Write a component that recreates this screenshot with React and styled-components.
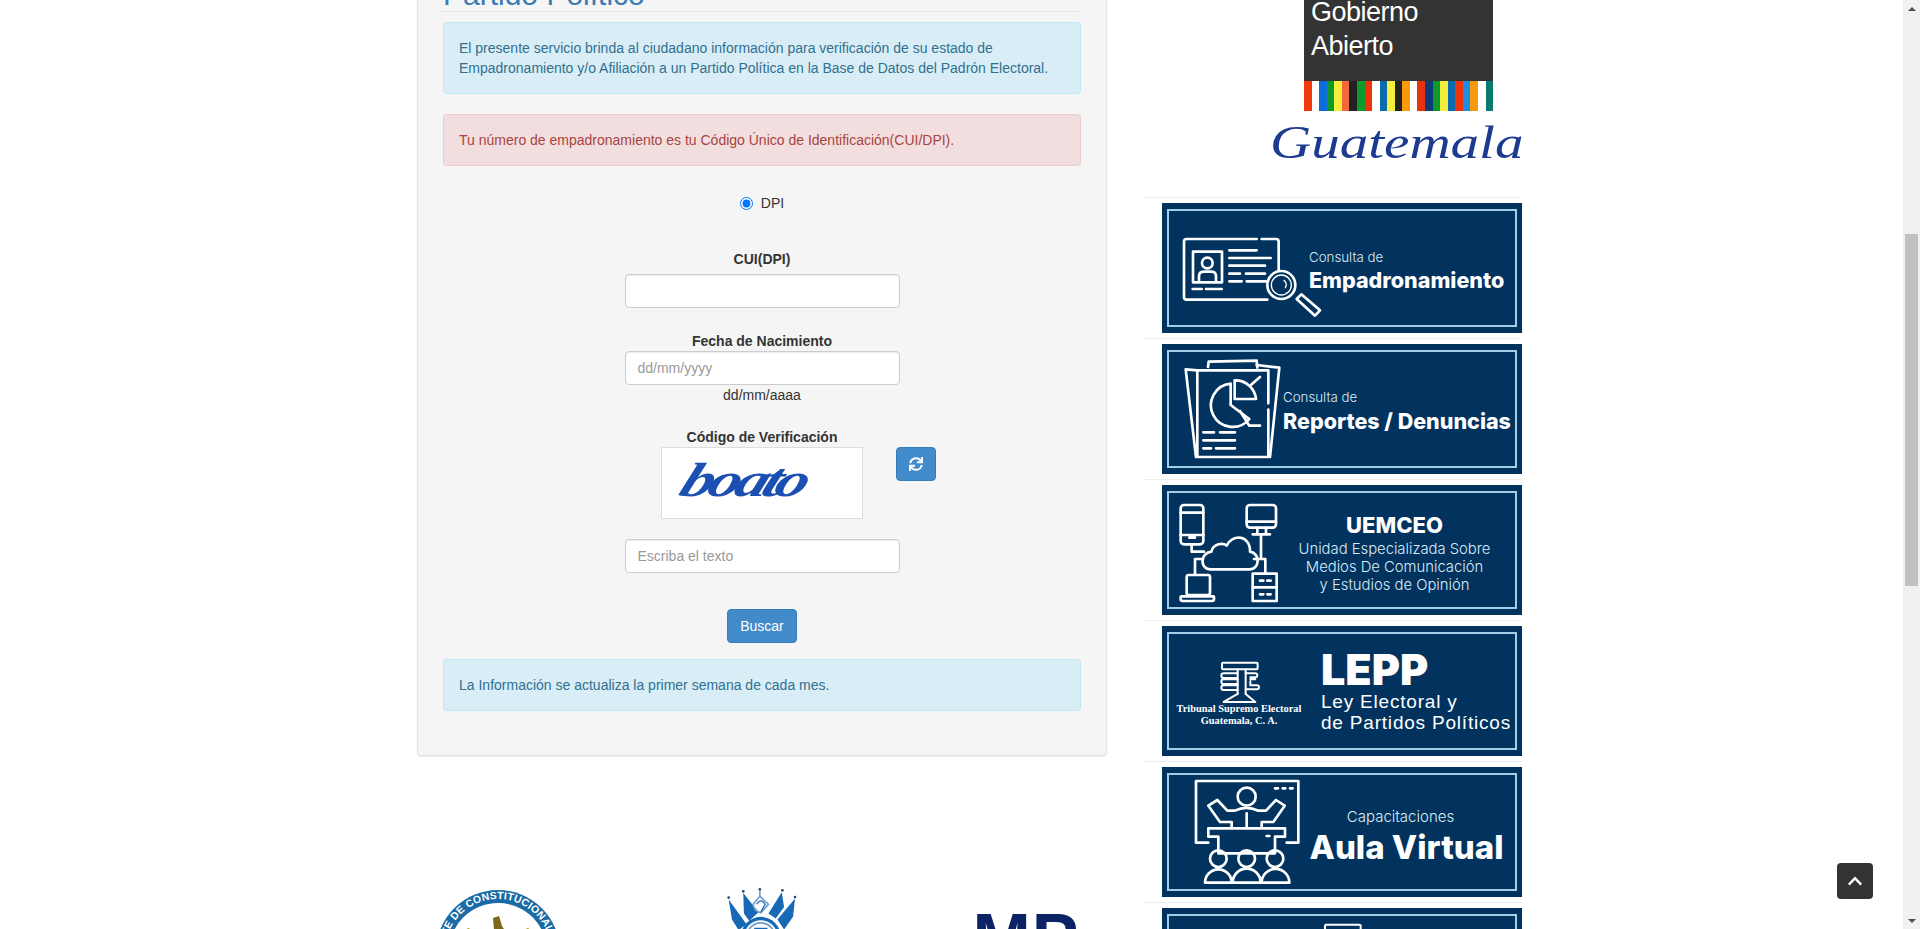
import React from 'react';
import styled, { createGlobalStyle } from 'styled-components';
import { FaSync, FaChevronUp } from 'react-icons/fa';

const Global = createGlobalStyle`
  html, body { margin: 0; padding: 0; height: 100%; overflow: hidden; background: #fff; }
  body { font-family: "Liberation Sans", Arial, sans-serif; font-size: 14px; line-height: 20px; color: #333; }
  * { box-sizing: border-box; }
`;

const Shell = styled.div`display: flex; height: 100vh; overflow: hidden;`;
const Viewport = styled.main`flex: 1; min-width: 0; overflow: hidden;`;
const Columns = styled.div`display: flex; gap: 36px; margin-top: -60px; padding-left: 417px;`;
const LeftCol = styled.div`flex: none; width: 690px;`;
const RightCol = styled.aside`flex: none; width: 379px;`;

const Well = styled.section`
  background: #f5f5f5; border: 1px solid #e3e3e3; border-radius: 4px;
  padding: 37px 25px 44px; box-shadow: inset 0 1px 1px rgba(0,0,0,.05), 0 1px 1px rgba(0,0,0,.08);
`;
const Title = styled.h2`
  margin: 0 -1px 10px -2px; padding-left: 2px; font-size: 30px; line-height: 33px; font-weight: 400;
  color: #3a7cb5; border-bottom: 1px solid #e6e6e6;
`;
const Alert = styled.div`
  border: 1px solid ${p => p.$tone === 'danger' ? '#ebccd1' : '#bce8f1'};
  background: ${p => p.$tone === 'danger' ? '#f2dede' : '#d9edf7'};
  color: ${p => p.$tone === 'danger' ? '#a94442' : '#31708f'};
  border-radius: 4px; padding: 15px 12px 15px 15px; margin-top: ${p => p.$top || 0}px;
`;
const RadioRow = styled.label`display: flex; justify-content: center; align-items: center; gap: 8px; height: 20px; margin-top: 27px;`;
const Radio = styled.input`margin: 0; width: 13px; height: 13px;`;
const Field = styled.div`display: flex; flex-direction: column; align-items: center; margin-top: ${p => p.$top || 0}px;`;
const Label = styled.label`font-weight: 700; color: #333; text-align: center; line-height: 20px;`;
const Hint = styled.span`text-align: center;`;
const TextInput = styled.input`
  display: block; width: 275px; height: 34px; margin-top: ${p => p.$top || 0}px; padding: 6px 12px;
  font: 14px/20px "Liberation Sans", Arial, sans-serif; color: #555; background: #fff;
  border: 1px solid #ccc; border-radius: 4px; box-shadow: inset 0 1px 1px rgba(0,0,0,.075);
  &::placeholder { color: #999; opacity: 1; }
`;
const CaptchaRow = styled.div`display: grid; grid-template-columns: 1fr 202px 1fr; align-items: start;`;
const CaptchaImage = styled.div`
  grid-column: 2; height: 72px; background: #fff; border: 1px solid #ddd; overflow: hidden;
  display: flex; padding: 6px 0 0 19px;
`;
const CaptchaWord = styled.span`
  display: inline-block; font: italic 700 48px/52px "Liberation Serif", serif; letter-spacing: -4px; color: #1c4fb2;
  transform: scaleX(1.36) skewX(-16deg); transform-origin: left center;
`;
const Btn = styled.button`
  display: inline-flex; align-items: center; justify-content: center; padding: 0; height: 34px; width: ${p => p.$w}px;
  background: #428bca; color: #fff; border: 1px solid #357ebd; border-radius: 4px;
  font: 14px/20px "Liberation Sans", Arial, sans-serif;
`;
const RefreshBtn = styled(Btn)`justify-self: start; margin-left: 33px;`;
const Center = styled.div`display: flex; justify-content: center; margin-top: ${p => p.$top || 0}px;`;

const LogoRow = styled.div`display: grid; grid-template-columns: repeat(3, 264px); margin: 131px -51px 0;`;
const LogoCell = styled.div`display: flex; justify-content: center; padding-top: ${p => p.$top || 0}px;`;
const MpMark = styled.span`font: 700 70px/70px "Liberation Sans", Arial, sans-serif; color: #0b2265; letter-spacing: 1px;`;

const OpenGov = styled.div`margin-left: 161px; width: 189px;`;
const OpenGovBox = styled.div`background: #333; color: #fff; padding: 55px 0 18px 7px; font-size: 27px; letter-spacing: -.5px; line-height: 34px;`;
const Stripes = styled.div`display: flex; height: 30px;`;
const Stripe = styled.span`flex: 1; background: ${p => p.$c};`;
const Signature = styled.div`height: 86px; padding: 3px 0 0 127px;`;
const SignatureWord = styled.span`
  display: inline-block; font: italic 400 46px/58px "Liberation Serif", serif; color: #1c3a8f;
  transform: scaleX(1.24); transform-origin: left center;
`;

const Item = styled.div`border-top: 1px solid #eee; padding: 5px 0;`;
const Banner = styled.a`display: flex; width: 360px; height: 130px; margin-left: 19px; padding: 6px 5px; background: #02335f; color: #fff;`;
const Frame = styled.div`flex: 1; min-width: 0; display: flex; align-items: ${p => p.$align || 'center'}; border: 2px solid #a5cdea;`;
const Icon = styled.svg`
  flex: none; overflow: visible; fill: none; stroke: #fff; stroke-width: 8; stroke-linecap: round; stroke-linejoin: round;
`;
const Stack = styled.div`
  flex: 1; min-width: 0; display: flex; flex-direction: column;
  align-items: ${p => p.$center ? 'center' : 'flex-start'};
  padding-top: ${p => p.$pt || 0}px; padding-right: ${p => p.$pr || 0}px; white-space: nowrap;
  font-family: Inter, "Open Sans", sans-serif;
`;
const Thin = styled.span`
  font-size: ${p => p.$size || 13.3}px; line-height: ${p => p.$lh || 18}px; font-weight: 300; color: #dcecf7;
  margin-right: ${p => p.$mr || 0}px;
`;
const Strong = styled.span`font-size: ${p => p.$size}px; line-height: ${p => p.$lh}px; font-weight: 800;`;
const TseBlock = styled.div`
  flex: none; width: 140px; padding-top: 26px; display: flex; flex-direction: column; align-items: center;
  font: 700 10.4px/12px "Liberation Serif", serif; white-space: nowrap;
`;
const LawStack = styled.div`flex: 1; padding: 15px 0 0 12px; display: flex; flex-direction: column; white-space: nowrap;`;
const LawTitle = styled.span`font: 900 43px/40px Inter, sans-serif; margin-bottom: 2px;`;
const LawLine = styled.span`font: 400 19px/21px "Liberation Sans", Arial, sans-serif; letter-spacing: .8px;`;
const LastMark = styled.div`flex: 1; display: flex; justify-content: center; padding-top: 6px;`;

const Scrollbar = styled.div`flex: none; width: 17px; background: #f1f1f1; display: flex; flex-direction: column; align-items: center;`;
const ArrowBox = styled.div`flex: none; height: 17px; display: flex; align-items: center; justify-content: center;`;
const Arrow = styled.span`
  width: 0; height: 0; border-left: 4px solid transparent; border-right: 4px solid transparent;
  ${p => p.$down ? 'border-top: 4px solid #505050;' : 'border-bottom: 4px solid #505050;'}
`;
const Thumb = styled.div`flex: none; width: 13px; height: 352px; margin-top: 217px; background: #c1c1c1;`;
const Fill = styled.div`flex: 1;`;
const ToTop = styled.button`
  position: fixed; right: 47px; bottom: 30px; width: 36px; height: 36px; padding: 0; border: 0; border-radius: 4px;
  background: #333; color: #fff; display: flex; align-items: center; justify-content: center;
`;

const stripes = ['#f03a0c','#fff','#0a6fd8','#0c9a2c','#f7ee3c','#f2683a','#222','#0c9a2c','#f0330c','#fff','#0a6cae','#f7ee3c','#222','#f79a0c','#fff','#e8330c','#0e3a78','#0c9a2c','#f2ee3c','#0a6cae','#f0330c','#1a8fe8','#f79a0c','#fff','#0a7a70'];

const TseMark = ({ w = 45, h = 43.3 }) => (
  <Icon width={w} height={h} viewBox="230 120 135 130" style={{ strokeWidth: 6 }}>
    <rect x="245" y="128" width="107" height="20" rx="3" />
    <path d="M292 148V222M316 148V222" />
    <path d="M292 160H250a7 7 0 0 0 0 14H292M292 178H250a7 7 0 0 0 0 14H292M292 196H250a7 7 0 0 0 0 14H292" />
    <path d="M316 160H345a6 6 0 0 1 0 12H330M330 178H345M330 184V196H350a6 6 0 0 1 0 12H316" />
    <path d="M292 222L250 246H345L316 222" />
  </Icon>
);

const CardIcon = () => (
  <Icon width={140} height={114} viewBox="87 634 420 342">
    <path d="M350 718H140a8 8 0 0 0-8 8V892a8 8 0 0 0 8 8H382M365 718H408a8 8 0 0 1 8 8V812" />
    <rect x="159" y="756" width="87" height="92" />
    <circle cx="202" cy="790" r="16" />
    <path d="M177 846V830q0-14 14-14H214q14 0 14 14V846" />
    <path d="M268 752H350M268 775H392M268 798H375M268 822H300M318 822H375M268 845H305M320 845H378M158 868H185M198 868H245" />
    <circle cx="424" cy="856" r="42" />
    <circle cx="424" cy="856" r="30" strokeWidth="4" />
    <path d="M432 842a16 16 0 0 1 4 22" strokeWidth="4" />
    <path d="M484 884L540 932L525 948L470 898Z" />
  </Icon>
);

const ReportIcon = () => (
  <Icon width={114} height={114} viewBox="87 51 342 342">
    <path d="M172 106L137 103L168 366" />
    <path d="M204 96L206 80L350 77L352 98" />
    <path d="M350 90L418 98L390 366" />
    <path d="M385 205V106H172V366H385V224" />
    <path d="M272 146A65 65 0 1 0 328 252L272 210Z" />
    <path d="M284 136V192H348A62 62 0 0 0 284 136ZM330 152L360 126M300 228L328 272H360" />
    <path d="M190 292H222M240 292H285M190 316H285M190 340H213M228 340H285" />
  </Icon>
);

const CloudIcon = () => (
  <Icon width={110} height={114} viewBox="87 474 330 342">
    <rect x="122" y="510" width="68" height="118" rx="10" />
    <path d="M122 533H190M122 600H190M148 608H165" />
    <rect x="320" y="510" width="88" height="68" rx="10" />
    <path d="M320 560H408M352 578V598M378 578V598M338 598H390" />
    <path d="M212 703C180 703 178 655 214 650C220 625 250 622 260 632C276 595 332 600 330 650C362 655 360 703 328 703Z" />
    <path d="M155 628V650H192M188 672H165V718M363 598V672H342M345 672H376V715" />
    <rect x="140" y="720" width="70" height="60" rx="6" />
    <path d="M124 784H220a2 2 0 0 1 2 2V792a6 6 0 0 1-6 6H128a6 6 0 0 1-6-6V786a2 2 0 0 1 2-2Z" />
    <rect x="338" y="716" width="72" height="82" />
    <path d="M338 757H410M360 737H370M382 737H392M360 778H370M382 778H392" />
  </Icon>
);

const ClassIcon = () => (
  <Icon width={135} height={114} viewBox="87 465 405 342">
    <path d="M205 668H168V483H475V668H440M405 505H414M428 505H436M450 505H458" />
    <circle cx="320" cy="530" r="27" />
    <path d="M205 557L232 540L262 572H285Q318 555 355 572H378L408 540L434 557L400 606H365V622M240 606H275V622M205 557L240 606M320 580V622" />
    <path d="M205 625H435V650H405V700H235V650H205ZM380 648H388" />
    <circle cx="235" cy="716" r="25" />
    <circle cx="320" cy="716" r="25" />
    <circle cx="405" cy="716" r="25" />
    <path d="M195 788a40 40 0 0 1 80 0M278 788a42 42 0 0 1 84 0M365 788a40 40 0 0 1 83 0M195 788H448" />
  </Icon>
);

const Seal = () => (
  <svg width="124" height="124" viewBox="0 0 124 124">
    <circle cx="62" cy="62" r="62" fill="#1a6aa6" />
    <circle cx="62" cy="62" r="49" fill="#fff" />
    <defs><path id="sealArc" d="M9 62A53 53 0 0 1 115 62" /></defs>
    <text fill="#fff" fontFamily="Liberation Sans, sans-serif" fontWeight="700" fontSize="10.4" letterSpacing=".2">
      <textPath href="#sealArc" startOffset="50%" textAnchor="middle">CORTE DE CONSTITUCIONALIDAD</textPath>
    </text>
    <path d="M57 28L63 26L66 36L70 42L68 50H60L58 40Z" fill="#7d6a18" />
    <path d="M28 42L34 50M32 38L36 48M96 42L90 50M92 38L88 48" stroke="#c9ac4a" strokeWidth="2.5" />
  </svg>
);

const Emblem = () => (
  <svg width="73" height="73" viewBox="30 20 220 220" fill="#1768b5">
    <circle cx="38" cy="52" r="4" fill="#24476e" />
    <circle cx="82" cy="33" r="4" fill="#24476e" />
    <circle cx="132" cy="27" r="4" fill="#24476e" />
    <circle cx="200" cy="30" r="4" fill="#24476e" />
    <circle cx="238" cy="50" r="4" fill="#24476e" />
    <path d="M38 58L92 132L68 150L48 118ZM82 38L128 96L100 122L84 100ZM198 36L205 80L180 115L158 100ZM238 55L232 110L205 148L185 118Z" />
    <path d="M132 30V48M132 48L112 72Q112 90 135 98L158 72Z" fill="none" stroke="#6f9fcc" strokeWidth="5" />
    <path d="M122 72Q135 52 148 72Q140 86 135 96" fill="none" stroke="#1768b5" strokeWidth="4" />
    <circle cx="135" cy="170" r="60" />
    <circle cx="135" cy="170" r="50" fill="#fff" />
    <circle cx="135" cy="170" r="42" fill="none" stroke="#6f9fcc" strokeWidth="5" />
    <path d="M115 143H155V150H140V180H130V150H115Z" />
  </svg>
);

const links = [
  <Frame key="a">
    <CardIcon />
    <Stack $pt={6}><Thin>Consulta de</Thin><Strong $size={21.5} $lh={28}>Empadronamiento</Strong></Stack>
  </Frame>,
  <Frame key="b">
    <ReportIcon />
    <Stack $pt={6}><Thin>Consulta de</Thin><Strong $size={21.5} $lh={30}>Reportes / Denuncias</Strong></Stack>
  </Frame>,
  <Frame key="c">
    <CloudIcon />
    <Stack $center $pr={5} $pt={4}>
      <Strong $size={22} $lh={30}>UEMCEO</Strong>
      <Thin $size={14.8} $lh={18}>Unidad Especializada Sobre</Thin>
      <Thin $size={14.8} $lh={18}>Medios De Comunicación</Thin>
      <Thin $size={14.8} $lh={18}>y Estudios de Opinión</Thin>
    </Stack>
  </Frame>,
  <Frame key="d" $align="flex-start">
    <TseBlock>
      <TseMark />
      <span>Tribunal Supremo Electoral</span>
      <span>Guatemala, C. A.</span>
    </TseBlock>
    <LawStack>
      <LawTitle>LEPP</LawTitle>
      <LawLine>Ley Electoral y</LawLine>
      <LawLine>de Partidos Políticos</LawLine>
    </LawStack>
  </Frame>,
  <Frame key="e">
    <ClassIcon />
    <Stack $center $pr={6} $pt={11}>
      <Thin $size={15} $mr={12}>Capacitaciones</Thin>
      <Strong $size={33} $lh={42}>Aula Virtual</Strong>
    </Stack>
  </Frame>,
  <Frame key="f" $align="flex-start">
    <LastMark><TseMark /></LastMark>
  </Frame>,
];

export default function App() {
  return (
    <>
      <Global />
      <Shell>
        <Viewport>
          <Columns>
            <LeftCol>
              <Well>
                <Title>Partido Político</Title>
                <Alert>El presente servicio brinda al ciudadano información para verificación de su estado de Empadronamiento y/o Afiliación a un Partido Política en la Base de Datos del Padrón Electoral.</Alert>
                <Alert $tone="danger" $top={20}>Tu número de empadronamiento es tu Código Único de Identificación(CUI/DPI).</Alert>
                <RadioRow><Radio type="radio" defaultChecked />DPI</RadioRow>
                <Field $top={36}>
                  <Label>CUI(DPI)</Label>
                  <TextInput $top={5} />
                </Field>
                <Field $top={23}>
                  <Label>Fecha de Nacimiento</Label>
                  <TextInput placeholder="dd/mm/yyyy" />
                  <Hint>dd/mm/aaaa</Hint>
                </Field>
                <Field $top={22}><Label>Código de Verificación</Label></Field>
                <CaptchaRow>
                  <CaptchaImage><CaptchaWord>boato</CaptchaWord></CaptchaImage>
                  <RefreshBtn $w={40}><FaSync size={14} /></RefreshBtn>
                </CaptchaRow>
                <Field $top={20}><TextInput placeholder="Escriba el texto" /></Field>
                <Center $top={36}><Btn $w={70}>Buscar</Btn></Center>
                <Alert $top={16}>La Información se actualiza la primer semana de cada mes.</Alert>
              </Well>
              <LogoRow>
                <LogoCell $top={3}><Seal /></LogoCell>
                <LogoCell><Emblem /></LogoCell>
                <LogoCell $top={17}><MpMark>MP</MpMark></LogoCell>
              </LogoRow>
            </LeftCol>
            <RightCol>
              <OpenGov>
                <OpenGovBox>Gobierno<br />Abierto</OpenGovBox>
                <Stripes>{stripes.map((c, i) => <Stripe key={i} $c={c} />)}</Stripes>
              </OpenGov>
              <Signature><SignatureWord>Guatemala</SignatureWord></Signature>
              {links.map((frame, i) => <Item key={i}><Banner>{frame}</Banner></Item>)}
            </RightCol>
          </Columns>
        </Viewport>
        <Scrollbar>
          <ArrowBox><Arrow /></ArrowBox>
          <Thumb />
          <Fill />
          <ArrowBox><Arrow $down /></ArrowBox>
        </Scrollbar>
        <ToTop><FaChevronUp size={16} /></ToTop>
      </Shell>
    </>
  );
}
